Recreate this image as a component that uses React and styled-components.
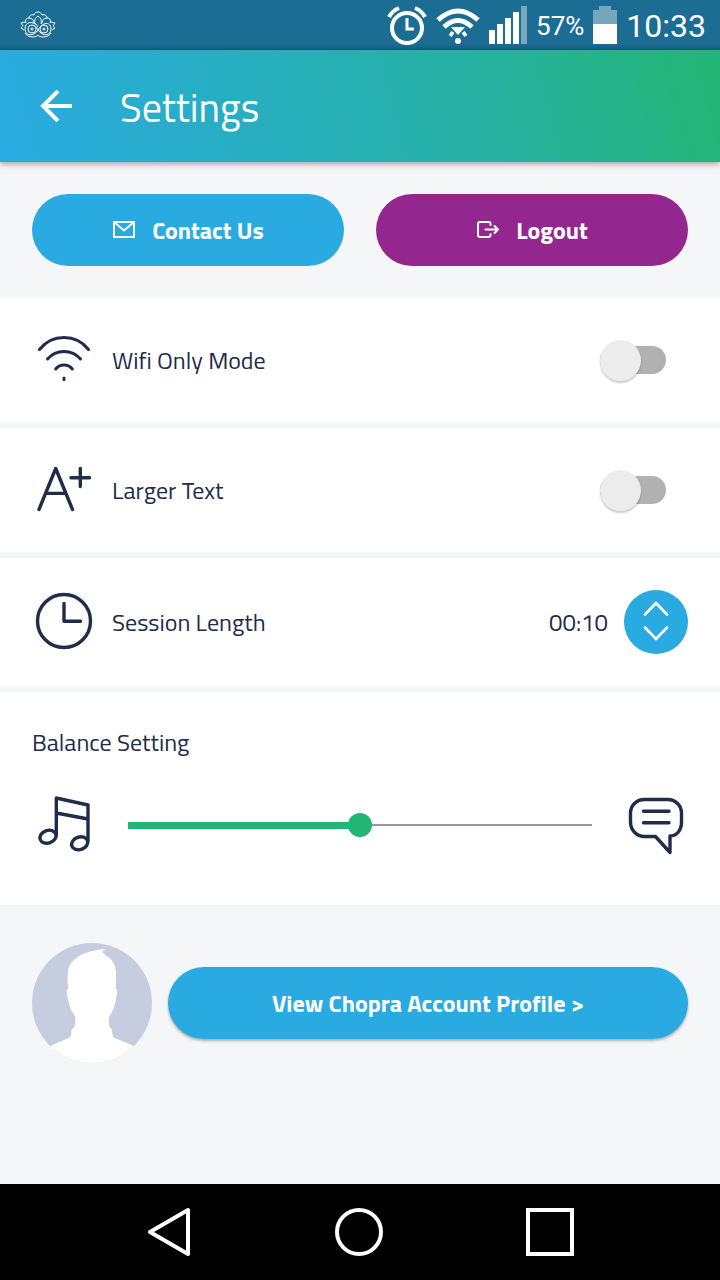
import React, { useState } from "react";
import styled, { createGlobalStyle } from "styled-components";

const navy = "#1f2d4a";
const blue = "#29abe2";
const purple = "#93278f";
const green = "#22b573";
const pageGrey = "#f5f6f8";

const GlobalStyle = createGlobalStyle`
  * {
    box-sizing: border-box;
  }
  body {
    margin: 0;
    background: ${pageGrey};
    color: ${navy};
    font-family: "Titillium Web", Roboto, "Noto Sans", sans-serif;
    font-size: 24px;
    line-height: 36px;
  }
  button {
    border: none;
    padding: 0;
    font: inherit;
    color: inherit;
    background: none;
    cursor: pointer;
  }
  svg {
    display: block;
    flex: none;
  }
`;

const Page = styled.div`
  min-height: 100vh;
  display: flex;
  flex-direction: column;
`;
const StatusBar = styled.div`
  display: flex;
  align-items: center;
  gap: 9px;
  height: 50px;
  padding: 0 14px 0 20px;
  background: linear-gradient(#1b6d94 44px, #185f81);
  color: #fff;
  font-family: Roboto, sans-serif;
`;
const Spacer = styled.div`
  flex: 1;
`;
const StatusText = styled.span`
  padding-top: 2px;
  font-size: ${props => props.$size}px;
`;
const Header = styled.header`
  display: flex;
  align-items: center;
  gap: 48px;
  height: 112px;
  padding: 0 40px;
  color: #fff;
  background: linear-gradient(75deg, ${blue}, #26b1a3 65%, ${green});
  box-shadow: 0 2px 6px rgba(0, 0, 0, 0.35);
`;
const Title = styled.h1`
  margin: 0;
  padding-top: 4px;
  font-size: 40px;
  line-height: 48px;
  font-weight: 400;
`;
const Actions = styled.div`
  display: grid;
  grid-template-columns: 1fr 1fr;
  gap: 32px;
  padding: 32px;
`;
const PillButton = styled.button`
  display: flex;
  flex: 1;
  align-items: center;
  justify-content: center;
  gap: 16px;
  height: 72px;
  border-radius: 36px;
  && {
    color: #fff;
    font-weight: 700;
    background: ${props => props.$color || blue};
  }
  box-shadow: ${props => (props.$raised ? "0 2px 3px rgba(0, 0, 0, 0.3)" : "none")};
`;
const List = styled.main`
  display: flex;
  flex-direction: column;
  gap: 6px;
`;
const Row = styled.div`
  display: flex;
  align-items: center;
  gap: 16px;
  padding: ${props => (props.$tall ? 32 : 30)}px 32px;
  background: #fff;
`;
const Label = styled.label`
  flex: 1;
`;
const Switch = styled.input`
  appearance: none;
  position: relative;
  width: 66px;
  height: 28px;
  margin: 0 22px 0 0;
  border-radius: 14px;
  background: #b1b1b1;
  cursor: pointer;
  &::before {
    content: "";
    position: absolute;
    top: -6px;
    left: 0;
    width: 41px;
    height: 41px;
    border-radius: 50%;
    background: #ececec;
    box-shadow: 0 2px 2px rgba(0, 0, 0, 0.2);
    transition: left 0.2s;
  }
  &:checked {
    background: #91dab9;
  }
  &:checked::before {
    left: 25px;
    background: ${green};
  }
`;
const RoundButton = styled.button`
  display: grid;
  place-items: center;
  width: 64px;
  height: 64px;
  border-radius: 50%;
  && {
    background: ${blue};
  }
`;
const Balance = styled.section`
  padding: 32px 32px 48px;
  background: #fff;
`;
const BalanceRow = styled.div`
  display: flex;
  align-items: center;
  gap: 32px;
  padding-top: 33px;
`;
const Slider = styled.input`
  appearance: none;
  flex: 1;
  min-width: 0;
  height: 24px;
  margin: 0;
  background: linear-gradient(${green}, ${green}) left center / var(--fill) 7px
      no-repeat,
    linear-gradient(#999, #999) left center / 100% 2px no-repeat;
  cursor: pointer;
  &::-webkit-slider-thumb {
    appearance: none;
    width: 24px;
    height: 24px;
    border-radius: 50%;
    background: ${green};
  }
`;
const Profile = styled.section`
  display: flex;
  align-items: center;
  gap: 16px;
  padding: 38px 32px;
`;
const NavBar = styled.nav`
  display: flex;
  align-items: center;
  justify-content: space-between;
  height: 96px;
  margin-top: auto;
  padding: 0 20%;
  background: #000;
`;
const NavButton = styled.button`
  display: grid;
  place-items: center;
  width: 50px;
  height: 50px;
`;

const LineIcon = ({ size = 64, width = 3.4, color = navy, children }) => (
  <svg
    width={size}
    height={size}
    viewBox={`0 0 ${size} ${size}`}
    fill="none"
    stroke={color}
    strokeWidth={width}
    strokeLinecap="round"
    strokeLinejoin="round"
    aria-hidden="true"
  >
    {children}
  </svg>
);

const LotusIcon = () => (
  <svg width="36" height="28" viewBox="0 0 36 28" fill="none" stroke="#fff" strokeWidth="1">
    <path d="M18 15C13 10 5 10 5 18c0 7 9 8 13 1 5-9 13-8 13-1 0 7-8 8-13 1-1-2-2-3 0-4" />
    <circle cx="12" cy="18" r="4" />
    <circle cx="24" cy="18" r="4" />
    <circle cx="12" cy="18" r="1" />
    <circle cx="24" cy="18" r="1" />
    <path d="M18 5c-3 2-4 5-3 8M18 5c3 2 4 5 3 8M14 4c1-4 7-4 8 0M14 4c-3-1-5 1-5 3M22 4c3-1 5 1 5 3M9 7c-3 0-4 2-3 5M27 7c3 0 4 2 3 5M9 7c3 0 5 2 5 5M27 7c-3 0-5 2-5 5M5 11l-4 1 2 3-2 2 3 2M31 11l4 1-2 3 2 2-3 2M5 22c2 4 9 5 12 3l1-1 1 1c3 2 10 1 12-3" />
  </svg>
);
const AlarmIcon = () => (
  <svg width="40" height="40" viewBox="0 0 40 40" fill="none" stroke="#fff">
    <circle cx="20" cy="23" r="15" strokeWidth="4" />
    <path d="M20 13v11h7" strokeWidth="3" />
    <path d="M2 12Q5 6 12 3M28 3q7 3 10 9" strokeWidth="4" />
  </svg>
);
const StatusWifiIcon = () => (
  <svg width="44" height="40" viewBox="0 0 44 40" fill="none" stroke="#fff">
    <path d="M2 15Q22-3 42 15" strokeWidth="5" />
    <path d="M8 22q14-13 28 0" strokeWidth="5" />
    <path d="M15 22h14l-7 8z" fill="#fff" stroke="none" />
    <path d="M14 28l3 2M30 28l-3 2" strokeWidth="5" />
    <circle cx="22" cy="36" r="3" fill="#fff" stroke="none" />
  </svg>
);
const SignalIcon = () => (
  <svg width="38" height="38" viewBox="0 0 38 38" fill="#fff">
    <path d="M0 24h6v14H0zM8 18h6v20H8zM16 12h6v26h-6zM24 6h6v32h-6z" />
    <path d="M32 0h6v38h-6z" opacity=".4" />
  </svg>
);
const BatteryIcon = () => (
  <svg width="24" height="38" viewBox="0 0 24 38" fill="#fff">
    <path d="M6 0h12v4h6v14H0V4h6z" opacity=".4" />
    <path d="M0 18h24v20H0z" />
  </svg>
);
const MailIcon = () => (
  <LineIcon size={24} width={2} color="#fff">
    <path d="M2 4h20v15H2zM2 4l10 8.500 10-8.500" strokeLinejoin="miter" />
  </LineIcon>
);
const LogoutIcon = () => (
  <LineIcon size={24} width={2} color="#fff">
    <path d="M14.500 7V6a2 2 0 0 0-2-2H4a2 2 0 0 0-2 2v11a2 2 0 0 0 2 2h8.500a2 2 0 0 0 2-2v-1M9.500 11.500H22M18.500 8l3.500 3.500-3.500 3.500" />
  </LineIcon>
);
const WifiIcon = () => (
  <LineIcon>
    <path d="M7.500 21.500A31 31 0 0 1 56.500 21.500M15.500 31A22 22 0 0 1 48.500 31M23.700 41A10.500 10.500 0 0 1 40.300 41" strokeWidth="3" />
    <path d="M32 50v1.500" strokeWidth="3" />
  </LineIcon>
);
const TextIcon = () => (
  <LineIcon>
    <path d="M7 51.500L23.700 10.500 40.500 51.500M13.500 35.400h20.500M48.300 10.500v18M39 19.700h18.500" />
  </LineIcon>
);
const ClockIcon = () => (
  <LineIcon>
    <circle cx="32" cy="31" r="26.500" />
    <path d="M32 13.500v17.800h16.500" />
  </LineIcon>
);
const MusicIcon = () => (
  <LineIcon>
    <path d="M24.300 42V5l31.700 7v36M24.300 20l31.700 6" />
    <ellipse cx="16" cy="43.700" rx="8.300" ry="6.300" transform="rotate(-20 16 43.700)" />
    <ellipse cx="47.700" cy="50.300" rx="8.300" ry="6.300" transform="rotate(-20 47.700 50.300)" />
  </LineIcon>
);
const SpeechIcon = () => (
  <LineIcon>
    <path d="M20.500 6.500h23c8 0 14 6 14 13.500v9c0 8-4.500 14-11.500 14v16.500L31.500 43.500h-11c-8 0-14-6.500-14-14.500v-9c0-7.500 6-13.500 14-13.500zM19.500 18.300h25.500M19.500 29.700h25.500" />
  </LineIcon>
);
const Avatar = () => (
  <svg width="120" height="120" viewBox="0 0 120 120" role="img" aria-label="Profile">
    <clipPath id="face">
      <circle cx="60" cy="60" r="60" />
    </clipPath>
    <g clipPath="url(#face)">
      <path d="M0 0h120v120H0z" fill="#c5cddf" />
      <path
        d="M18 103L38 94.500Q39.500 91 39.700 86.500L42.500 84Q44 78 43 73 37.500 66 36.700 58.500 34.500 53 34.700 47L36.300 46Q35 36 36 28C38 14 56 7 74 6 70 7.500 70 9 72 11 78 15 84 19 84 30V46L85.200 47Q85 53 83.500 58.500 82 67 77.500 73 76 78 77.500 84L80 86.500Q80 91 81.500 94.500L102 103V120H18z"
        fill="#fff"
      />
    </g>
  </svg>
);

export default function App() {
  const [balance, setBalance] = useState(50);
  return (
    <Page>
      <GlobalStyle />
      <StatusBar>
        <LotusIcon />
        <Spacer />
        <AlarmIcon />
        <StatusWifiIcon />
        <SignalIcon />
        <StatusText $size={26}>57%</StatusText>
        <BatteryIcon />
        <StatusText $size={32}>10:33</StatusText>
      </StatusBar>
      <Header>
        <button aria-label="Back">
          <LineIcon size={32} width={4} color="#fff">
            <path d="M32 16H3M18 1L3 16l15 15" strokeLinecap="butt" strokeLinejoin="miter" />
          </LineIcon>
        </button>
        <Title>Settings</Title>
      </Header>
      <Actions>
        <PillButton>
          <MailIcon />
          Contact Us
        </PillButton>
        <PillButton $color={purple}>
          <LogoutIcon />
          Logout
        </PillButton>
      </Actions>
      <List>
        <Row>
          <WifiIcon />
          <Label htmlFor="wifi">Wifi Only Mode</Label>
          <Switch id="wifi" type="checkbox" />
        </Row>
        <Row>
          <TextIcon />
          <Label htmlFor="larger">Larger Text</Label>
          <Switch id="larger" type="checkbox" />
        </Row>
        <Row $tall>
          <ClockIcon />
          <Label htmlFor="length">Session Length</Label>
          <span>00:10</span>
          <RoundButton id="length">
            <LineIcon size={48} width={2.6} color="#fff">
              <path d="M13 16.500L24 5l11 11.500M13 29.500L24 41l11-11.500" />
            </LineIcon>
          </RoundButton>
        </Row>
        <Balance>
          <label htmlFor="balance">Balance Setting</label>
          <BalanceRow>
            <MusicIcon />
            <Slider
              id="balance"
              type="range"
              value={balance}
              onChange={e => setBalance(Number(e.target.value))}
              style={{ "--fill": `${balance}%` }}
            />
            <SpeechIcon />
          </BalanceRow>
        </Balance>
      </List>
      <Profile>
        <Avatar />
        <PillButton $raised>View Chopra Account Profile &gt;</PillButton>
      </Profile>
      <NavBar>
        <NavButton aria-label="Back">
          <LineIcon size={50} width={4} color="#fff">
            <path d="M44 3v44L6 25z" />
          </LineIcon>
        </NavButton>
        <NavButton aria-label="Home">
          <LineIcon size={50} width={4} color="#fff">
            <circle cx="24" cy="25" r="22" />
          </LineIcon>
        </NavButton>
        <NavButton aria-label="Recent apps">
          <LineIcon size={50} width={4} color="#fff">
            <path d="M2 3h44v44H2z" strokeLinejoin="miter" />
          </LineIcon>
        </NavButton>
      </NavBar>
    </Page>
  );
}
